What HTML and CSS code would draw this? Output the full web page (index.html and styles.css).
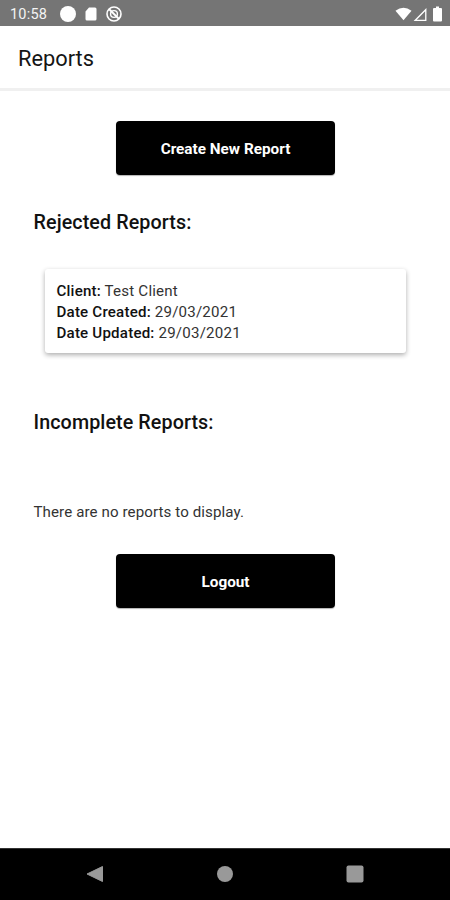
FILE: index.html
```html
<!DOCTYPE html>
<html lang="en">
<head>
<meta charset="utf-8">
<title>Reports</title>
<link rel="stylesheet" href="styles.css">
</head>
<body>
<div class="phone">
  <div class="status">
    <span class="time">10:58</span>
    <svg class="ic" width="18" height="18" viewBox="0 0 18 18"><circle cx="9" cy="9" r="8" fill="#fff"/></svg>
    <svg class="ic" width="14" height="18" viewBox="0 0 14 18"><path d="M5 2.500h6a1.500 1.500 0 0 1 1.500 1.500V14a1.500 1.500 0 0 1-1.500 1.500H3A1.500 1.500 0 0 1 1.500 14V6.500z" fill="#fff"/></svg>
    <svg class="ic" width="18" height="18" viewBox="0 0 18 18"><circle cx="9" cy="9" r="7" fill="none" stroke="#fff" stroke-width="1.600"/><circle cx="9" cy="9" r="3.400" fill="none" stroke="#fff" stroke-width="1.400"/><path d="M4 4l10 10" stroke="#fff" stroke-width="1.800"/></svg>
    <span class="spacer"></span>
    <div class="sys">
      <svg class="ic" width="17" height="14" viewBox="0 0 18 14"><path d="M0.500 3.500Q9-2.500 17.500 3.500L9 13.500z" fill="#fff"/></svg>
      <svg class="ic" width="16" height="15" viewBox="0 0 14 14"><path d="M13 1v12H1zM11.800 4L4 11.800h7.800z" fill="#fff" fill-rule="evenodd"/></svg>
      <svg class="ic battery" width="9" height="16" viewBox="0 0 9 15"><path d="M3 0h3v1.500h2a1 1 0 0 1 1 1V14a1 1 0 0 1-1 1H1a1 1 0 0 1-1-1V2.500a1 1 0 0 1 1-1h2z" fill="#fff"/></svg>
    </div>
  </div>
  <header class="appbar">Reports</header>
  <main class="content">
    <a class="btn btn-create">Create New Report</a>
    <h2 class="title title-rejected">Rejected Reports:</h2>
    <div class="card">
      <p><b>Client:</b> Test Client</p>
      <p><b>Date Created:</b> 29/03/2021</p>
      <p><b>Date Updated:</b> 29/03/2021</p>
    </div>
    <h2 class="title title-incomplete">Incomplete Reports:</h2>
    <p class="empty">There are no reports to display.</p>
    <a class="btn btn-logout">Logout</a>
  </main>
  <nav class="navbar">
    <svg width="18" height="18" viewBox="0 0 18 18"><path d="M16.500 1.500v15L1 9z" fill="#999" stroke="#999" stroke-linejoin="round"/></svg>
    <svg width="18" height="18" viewBox="0 0 18 18"><circle cx="9" cy="9" r="8" fill="#999"/></svg>
    <svg width="18" height="18" viewBox="0 0 18 18"><rect x="0.500" y="0.500" width="17" height="17" rx="2" fill="#999"/></svg>
  </nav>
</div>
</body>
</html>
```
FILE: styles.css
```css
* { box-sizing: border-box; }
html, body { margin: 0; padding: 0; }
body { background: #fff; font-family: Roboto, "Liberation Sans", sans-serif; color: #111; }
.phone { width: 450px; height: 900px; display: flex; flex-direction: column; overflow: hidden; }
.status { height: 26px; flex: none; background: #757575; color: #fff; display: flex; align-items: center; padding: 2px 8px 0 10px; gap: 7px; }
.time { font-size: 14.500px; margin-right: 5px; letter-spacing: 0.200px; opacity: .92; }
.spacer { flex: 1; }
.sys { display: flex; align-items: center; }
.battery { margin-left: 5px; }
.ic { display: block; flex: none; }
.appbar { height: 65px; flex: none; border-bottom: 3px solid #f0f0f0; padding: 20px 0 0 18px; font-size: 21.800px; line-height: 26px; color: #151515; }
.content { flex: 1; display: flex; flex-direction: column; align-items: stretch; padding: 30px 0 0 33.500px; }
.btn { display: flex; align-items: center; justify-content: center; width: 219px; height: 54px; margin-left: 82.500px; padding-top: 2px; background: #000; color: #fff; font-weight: 700; font-size: 15.300px; border-radius: 4px; box-shadow: 0 1px 1px rgba(0,0,0,.3); }
.title { margin: 0; font-size: 19.700px; font-weight: 500; line-height: 24px; color: #111; letter-spacing: 0.100px; }
.title-rejected { margin-top: 36px; }
.card { width: 361px; height: 84px; margin: 34px 0 0 11px; padding: 12px 12px; background: #fff; border-radius: 3px; box-shadow: 0 2px 5px rgba(0,0,0,.32); font-size: 15.100px; line-height: 21px; }
.card p { margin: 0; color: #333; letter-spacing: 0.200px; }
.card b { font-weight: 500; color: #111; }
.title-incomplete { margin-top: 58px; }
.empty { margin: 67px 0 0; font-size: 15.100px; line-height: 20px; color: #333; letter-spacing: 0.100px; }
.btn-logout { margin-top: 32px; }
.navbar { height: 52px; flex: none; background: #000; border-top: 1px solid #333; display: flex; align-items: center; justify-content: space-between; padding: 0 86px 2px 86px; }
```
